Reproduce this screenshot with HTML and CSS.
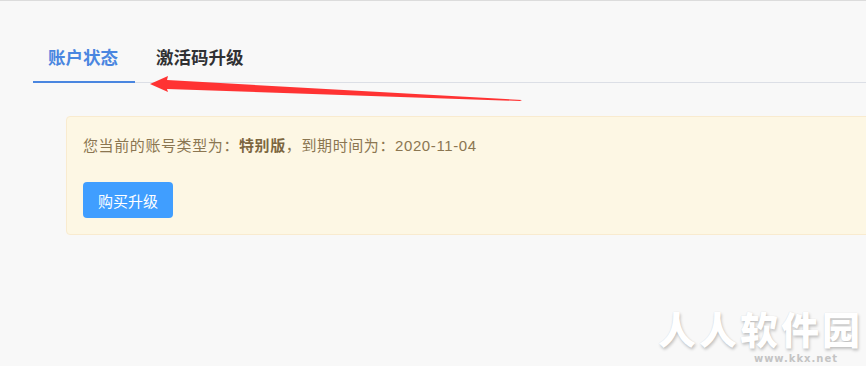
FILE: index.html
```html
<!DOCTYPE html>
<html lang="zh-CN">
<head>
    <meta charset="UTF-8">
    <title>账户状态</title>
    <link rel="stylesheet" href="styles.css">
</head>
<body>
    <div class="page">
        <div class="tabs">
            <div class="tab active">账户状态</div>
            <div class="tab">激活码升级</div>
        </div>

        <div class="alert">
            <p class="alert-text">您当前的账号类型为：<b>特别版</b>，到期时间为：2020-11-04</p>
            <button class="btn-primary">购买升级</button>
        </div>
    </div>

    <svg class="arrow" width="866" height="366" viewBox="0 0 866 366">
        <polygon points="150,84 168,76 167,80 522,100 520,101 167,89 168,92" fill="#f33"/>
    </svg>

    <div class="watermark">
        <div class="wm-title">人人软件园</div>
        <div class="wm-url">www.kkx.net</div>
    </div>
</body>
</html>
```

FILE: styles.css
```css
html, body {
    margin: 0;
    height: 100%;
}

body {
    font-family: "Liberation Sans", "Noto Sans CJK SC", sans-serif;
    background-color: #f8f8f8;
    border-top: 1px solid #dcdcdc;
    box-sizing: border-box;
    overflow: hidden;
    position: relative;
}

.page {
    padding-top: 37px;
}

.tabs {
    display: flex;
    margin-left: 33px;
    border-bottom: 1px solid #dcdfe6;
}

.tab {
    height: 40px;
    line-height: 40px;
    padding: 0 20px 3px 21px;
    margin-bottom: -1px;
    border-bottom: 2px solid transparent;
    font-size: 17.5px;
    font-weight: bold;
    color: #303133;
}

.tab.active {
    padding-left: 15px;
    padding-right: 17px;
    color: #4a86e0;
    border-bottom-color: #4a86e0;
}

.alert {
    margin: 33px -40px 0 66px;
    padding: 19px 16px 16px;
    background-color: #fdf7e4;
    border: 1px solid #f9ebcf;
    border-radius: 4px;
}

.alert-text {
    margin: 0 0 26px;
    font-size: 15px;
    line-height: 20px;
    letter-spacing: 0.6px;
    color: #8b7651;
}

.alert-text b {
    color: #7c6640;
}

.btn-primary {
    width: 90px;
    height: 36px;
    border: none;
    border-radius: 4px;
    background-color: #409eff;
    color: #fff;
    font-family: inherit;
    font-size: 15px;
    display: block;
}

.arrow {
    position: absolute;
    left: 0;
    top: -1px;
    pointer-events: none;
}

.watermark {
    position: absolute;
    right: 3px;
    bottom: 0;
    text-align: right;
}

.wm-title {
    margin-bottom: 2px;
    font-size: 38px;
    font-weight: 900;
    line-height: 38px;
    letter-spacing: 3px;
    color: #fff;
    text-shadow: 1px 2px 3px rgba(0, 0, 0, 0.22), 0 0 1px rgba(0, 0, 0, 0.12);
}

.wm-url {
    margin-right: 25px;
    font-family: "DejaVu Sans", sans-serif;
    font-size: 10px;
    font-weight: bold;
    line-height: 14px;
    letter-spacing: 1px;
    color: #c4c4c4;
}
```
